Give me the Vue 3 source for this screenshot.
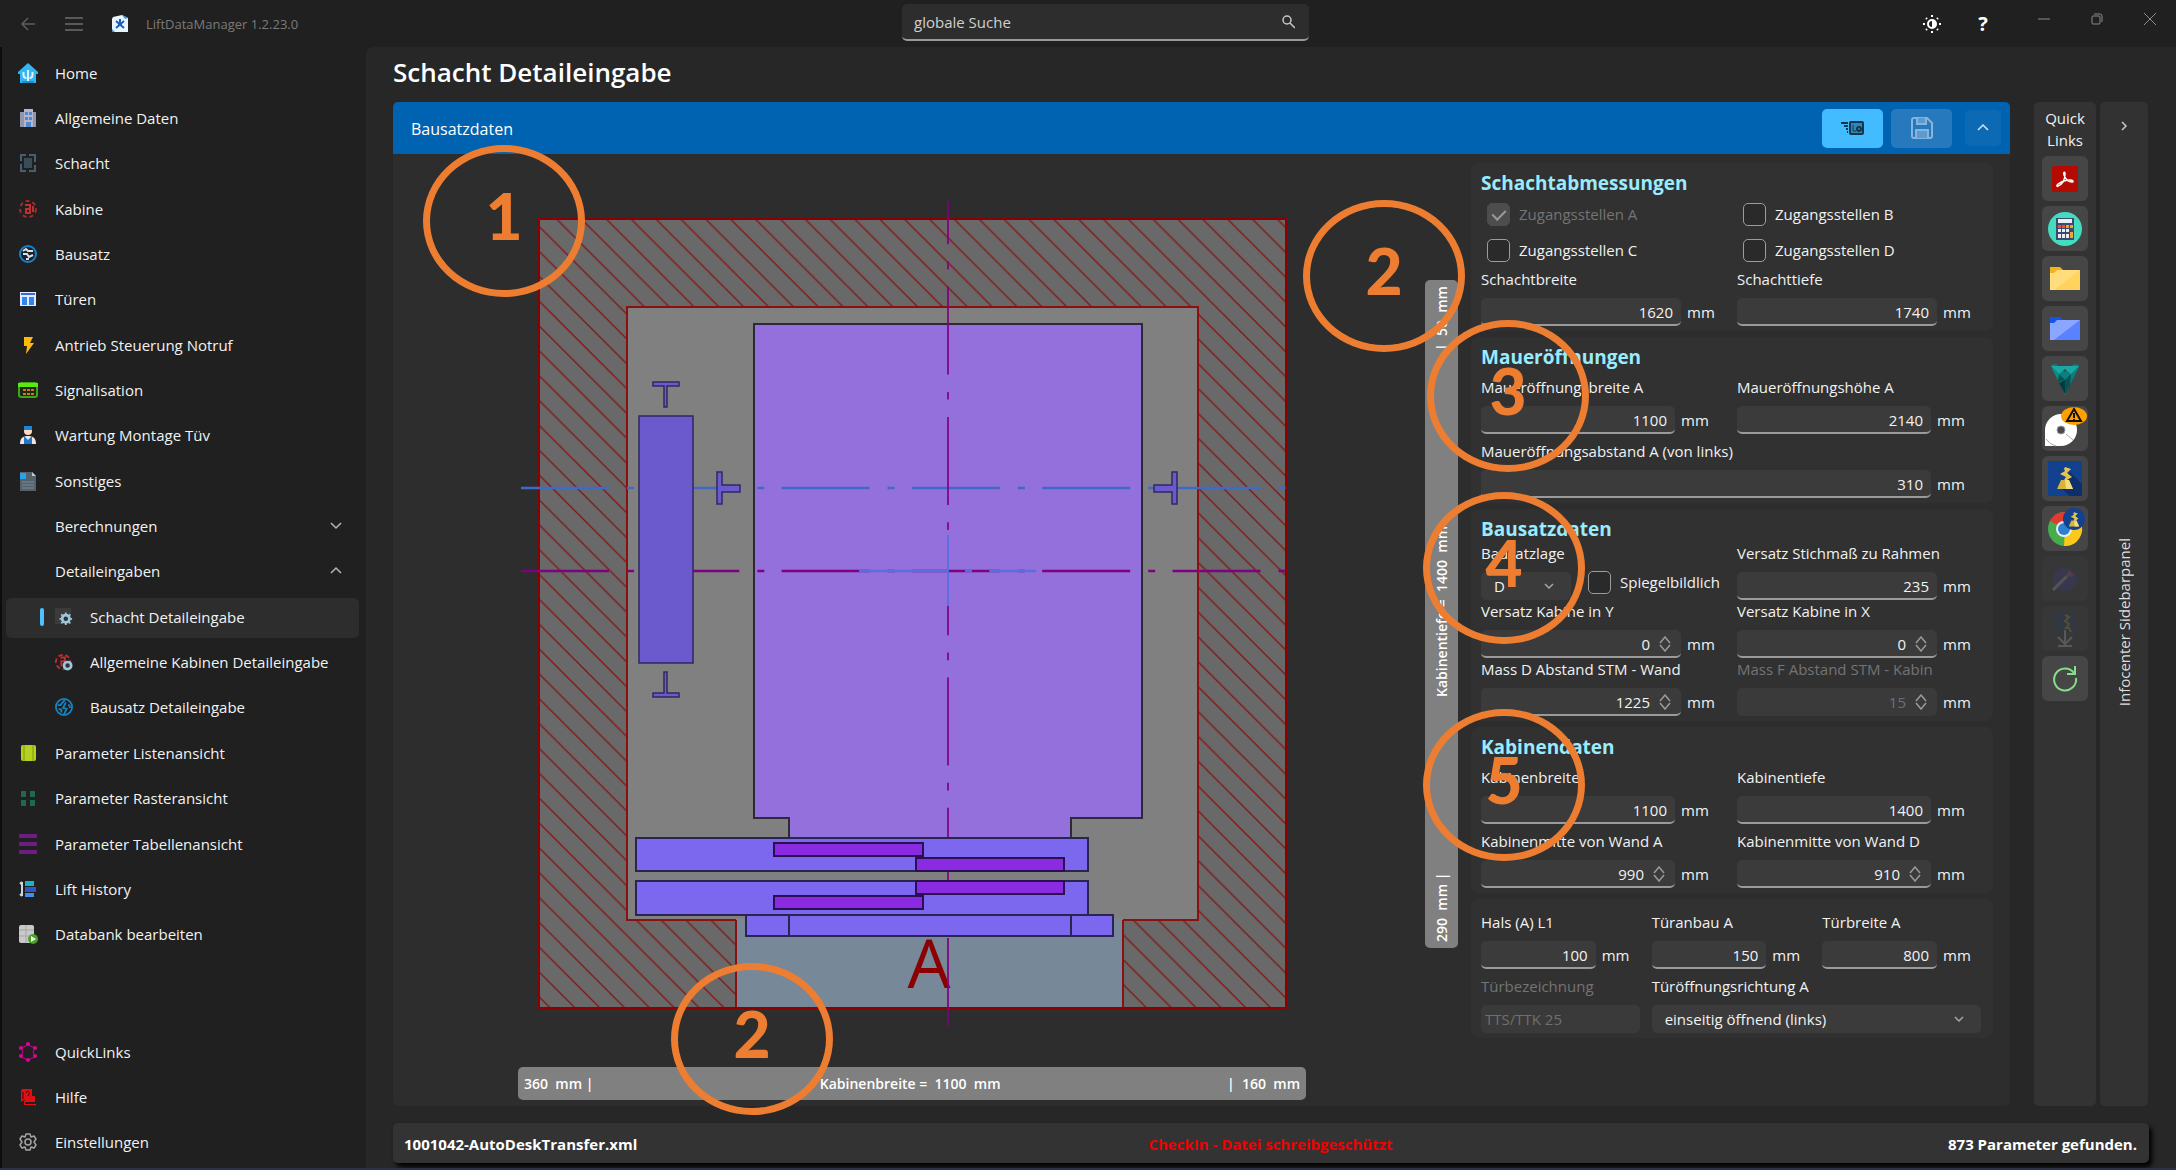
<script setup>
const icons = {
  home: '<path d="M10 0 20 9v2h-2v9H2v-9H0V9z" fill="#35b5f2"/><path d="M10 7v12M5.500 9v3a3 3 0 0 0 3 3M14.500 9v3a3 3 0 0 1-3 3" stroke="#d9f3ff" stroke-width="2" fill="none"/><path d="M4 18h12v2H4z" fill="#1d8fd0"/>',
  building: '<path d="M2 4h4V1h9v3h3v15H2z" fill="#8f97ad"/><path d="M6 1h9v18H6z" fill="#b9b4c9"/><path d="M7 4h3v3H7zm4 0h3v3h-3zM7 9h3v3H7zm4 0h3v3h-3zM8 14h5v5H8z" fill="#4a8bd4"/>',
  shaft: '<path d="M8 2H3v6M3 11v7h5M11 18h6v-6M17 9V2h-6" fill="none" stroke="#46606f" stroke-width="2"/><path d="M6 5h8v10H6z" fill="#3a4c58"/>',
  cabin: '<circle cx="10" cy="10" r="8" fill="none" stroke="#a82a2e" stroke-width="2" stroke-dasharray="4 3"/><path d="M7 6h5v4H8v4h4v-3M15 7v6" fill="none" stroke="#c22f33" stroke-width="2"/>',
  kit: '<circle cx="10" cy="10" r="8" fill="#17222b" stroke="#1683c4" stroke-width="2"/><path d="M5 7l3-2 2 2h5M5 10h4l2 3 4-2M8 15l3 0" fill="none" stroke="#d9dfe4" stroke-width="2"/>',
  door: '<path d="M2 3h16v14H2z" fill="#e4ecff"/><path d="M3 4h14v2H3z" fill="#3f66d8"/><path d="M4 8h5v8H4zm7 0h5v8h-5z" fill="#2f86ee"/>',
  bolt: '<path d="M6 2h9l-3 6h4L8 19l1-8H6z" fill="#ffb90a"/>',
  signal: '<rect x="1" y="3" width="18" height="14" rx="2" fill="#1c2a13" stroke="#3fa31c" stroke-width="2"/><path d="M0 3h20v4H0z" fill="#5be80e"/><path d="M5 9h3v2H5zm4 0h3v2H9zm4 0h3v2h-3zM5 13h3v2H5zm4 0h3v2H9zm4 0h3v2h-3z" fill="#e0701c"/>',
  worker: '<circle cx="10" cy="6" r="4" fill="#ffd9c2"/><path d="M6 1h8v4H6z" fill="#1d83d6"/><path d="M2 19c0-6 3-8 8-8s8 2 8 8z" fill="#f2e5e0"/><path d="M6 11l4 4 4-4v8H6z" fill="#1b79cf"/>',
  doc: '<path d="M2 1h12l4 4v15H2z" fill="#55626b"/><path d="M14 1l4 4h-4z" fill="#c3ccd2"/><path d="M2 2h6v6H2z" fill="#25a4ef"/><path d="M4 11h12M4 14h12M4 17h12" stroke="#7c8a94"/>',
  shaftGear: '<path d="M0 0h18v18H0z" fill="#3b3b3b"/><path d="M12 5v14M5 12h14M7 7l10 10M17 7L7 17" stroke="#9ec5d8" stroke-width="2"/><circle cx="12" cy="12" r="4" fill="#30343a" stroke="#9ec5d8" stroke-width="3"/>',
  cabinGear: '<circle cx="9" cy="10" r="8" fill="none" stroke="#c22f33" stroke-width="2" stroke-dasharray="5 3"/><path d="M6 5h5v4H7v6" fill="none" stroke="#c22f33" stroke-width="2"/><circle cx="14" cy="14" r="4" fill="#30343a" stroke="#9ec5d8" stroke-width="3"/>',
  kitRing: '<circle cx="10" cy="10" r="9" fill="none" stroke="#1683c4" stroke-width="2"/><path d="M11 2L6 8l-3 0M12 5l-3 6 4 1-3 6M15 7l2 4M4 12l3 1 0 3" fill="none" stroke="#1683c4" stroke-width="2"/>',
  list: '<rect x="3" y="2" width="15" height="16" rx="2" fill="#b4d121"/><path d="M6 2v16M15 2v16" stroke="#7e9a10"/>',
  grid: '<path d="M3 3h5v6H3zm9 0h5v6h-5zM3 12h5v6H3zm9 0h5v6h-5z" fill="#1f6a4d"/>',
  table: '<path d="M1 2h18M1 10h18M1 18h18" stroke="#6c1f80" stroke-width="4"/>',
  history: '<path d="M4 3v14M2 5l2-2M2 15l2 2" stroke="#c9d6de" stroke-width="2"/><path d="M7 2h9v5H7z" fill="#17b3c9"/><path d="M7 8h11v5H7z" fill="#3155c8"/><path d="M7 14h9v4H7z" fill="#3f8ff0"/>',
  db: '<rect x="1" y="1" width="15" height="18" rx="2" fill="#c9c9c9"/><path d="M1 6h15M1 12h15M8 1v18" stroke="#a5a5a5"/><circle cx="15" cy="15" r="5" fill="#4aa02a"/><path d="M13 12l5 3-5 3z" fill="#e9ffe0"/>',
  links: '<path d="M10 3L3 6l2 4-2 5 7 3 7-3-2-5 2-4z" fill="none" stroke="#c8008c"/><g fill="#e0009c"><circle cx="10" cy="2" r="2"/><circle cx="3" cy="6" r="2"/><circle cx="17" cy="6" r="2"/><circle cx="3" cy="14" r="2"/><circle cx="17" cy="14" r="2"/><circle cx="10" cy="18" r="2"/></g>',
  help: '<path d="M4 2h10v11H6l-3 2V4z" fill="#e00f14"/><path d="M14 9l3 0 0 6H7v2h11v2l-2-1H6v-4" fill="#e00f14"/><path d="M8 6c1-3 5-1 3 1l-1 2M5 5v7" stroke="#3a0a0a" fill="none"/>',
  gear: '<path d="M8 2h4l1 3 3-1 2 3-2 3 2 3-2 3-3-1-1 3H8l-1-3-3 1-2-3 2-3-2-3 2-3 3 1z" fill="none" stroke="#a5a5a5" stroke-width="1.500" stroke-linejoin="round"/><circle cx="10" cy="10" r="3" fill="none" stroke="#a5a5a5" stroke-width="1.500"/>',
}

const mainNav = [
  { label: 'Home', icon: 'home' },
  { label: 'Allgemeine Daten', icon: 'building' },
  { label: 'Schacht', icon: 'shaft' },
  { label: 'Kabine', icon: 'cabin' },
  { label: 'Bausatz', icon: 'kit' },
  { label: 'Türen', icon: 'door' },
  { label: 'Antrieb Steuerung Notruf', icon: 'bolt' },
  { label: 'Signalisation', icon: 'signal' },
  { label: 'Wartung Montage Tüv', icon: 'worker' },
  { label: 'Sonstiges', icon: 'doc' },
  { label: 'Berechnungen', chevron: 'M2 4l5 5 5-5' },
  { label: 'Detaileingaben', chevron: 'M2 9l5-5 5 5' },
  { label: 'Schacht Detaileingabe', icon: 'shaftGear', sub: true, active: true },
  { label: 'Allgemeine Kabinen Detaileingabe', icon: 'cabinGear', sub: true },
  { label: 'Bausatz Detaileingabe', icon: 'kitRing', sub: true },
  { label: 'Parameter Listenansicht', icon: 'list' },
  { label: 'Parameter Rasteransicht', icon: 'grid' },
  { label: 'Parameter Tabellenansicht', icon: 'table' },
  { label: 'Lift History', icon: 'history' },
  { label: 'Databank bearbeiten', icon: 'db' },
]
const footNav = [
  { label: 'QuickLinks', icon: 'links' },
  { label: 'Hilfe', icon: 'help' },
  { label: 'Einstellungen', icon: 'gear' },
]

const widthScale = ['360  mm |', 'Kabinenbreite =  1100  mm', '|  160  mm']
const depthScale = ['290  mm |', 'Kabinentiefe =  1400  mm', '|  50  mm']

const cards = [
  {
    title: 'Schachtabmessungen',
    checks: [
      { id: 'za', label: 'Zugangsstellen A', checked: true, disabled: true },
      { id: 'zb', label: 'Zugangsstellen B' },
      { id: 'zc', label: 'Zugangsstellen C' },
      { id: 'zd', label: 'Zugangsstellen D' },
    ],
    fields: [
      { id: 'sb', label: 'Schachtbreite', value: '1620' },
      { id: 'st', label: 'Schachttiefe', value: '1740' },
    ],
  },
  {
    title: 'Maueröffnungen',
    cls: 'spaced narrow',
    fields: [
      { id: 'mb', label: 'Maueröffnungsbreite A', value: '1100' },
      { id: 'mh', label: 'Maueröffnungshöhe A', value: '2140' },
      { id: 'ma', label: 'Maueröffnungsabstand A (von links)', value: '310', wide: true },
    ],
  },
  {
    title: 'Bausatzdaten',
    fields: [
      { id: 'bl', label: 'Bausatzlage', mirror: true },
      { id: 'vs', label: 'Versatz Stichmaß zu Rahmen', value: '235' },
      { id: 'vy', label: 'Versatz Kabine in Y', value: '0', step: true },
      { id: 'vx', label: 'Versatz Kabine in X', value: '0', step: true },
      { id: 'md', label: 'Mass D Abstand STM - Wand', value: '1225', step: true },
      { id: 'mf', label: 'Mass F Abstand STM - Kabin', value: '15', step: true, disabled: true },
    ],
  },
  {
    title: 'Kabinendaten',
    cls: 'spaced narrow',
    fields: [
      { id: 'kb', label: 'Kabinenbreite', value: '1100' },
      { id: 'kt', label: 'Kabinentiefe', value: '1400' },
      { id: 'ka', label: 'Kabinenmitte von Wand A', value: '990', step: true },
      { id: 'kd', label: 'Kabinenmitte von Wand D', value: '910', step: true },
    ],
  },
  {
    cls: 'spaced thirds',
    fields: [
      { id: 'ha', label: 'Hals (A) L1', value: '100' },
      { id: 'ta', label: 'Türanbau A', value: '150' },
      { id: 'tb', label: 'Türbreite A', value: '800' },
      { id: 'tz', label: 'Türbezeichnung', value: 'TTS/TTK 25', text: true, disabled: true },
      { id: 'to', label: 'Türöffnungsrichtung A', select: 'einseitig öffnend (links)', wide: true },
    ],
  },
]

const robot = '<path d="M23 11l6 2-4 4 5 4-5 3h-3l2-3-6-3 5-3-1-2z" fill="#e8c54a"/><path d="M19 24h8l4 9H15z" fill="#d9b238"/><path d="M23 24h4l4 9h-7z" fill="#f3dc7a"/>'
const quick = [
  { label: 'PDF', svg: '<rect x="10" y="10" width="26" height="26" rx="2" fill="#b30b00"/><path d="M16 30c5-2 7-7 7-12 0-3-2-2-1 1 2 5 5 7 8 7 2 0 1-2-2-2-4 0-9 2-12 4-2 2-1 3 0 2z" fill="none" stroke="#fff" stroke-width="1.500"/>' },
  { label: 'Rechner', svg: '<circle cx="23" cy="23" r="17" fill="#43dcc1"/><path d="M14 12h18v22H14z" fill="#3e4a6b"/><path d="M16 13h14v4H16z" fill="#e8eef5"/><path d="M16 19h3v3h-3zm4 0h3v3h-3z" fill="#e5533f"/><path d="M24 19h3v3h-3zm4 0h3v3h-3z" fill="#f0a23a"/><path d="M16 23h3v3h-3zm4 0h3v3h-3zm4 0h3v3h-3zM16 28h3v4h-3zm4 0h3v4h-3zm4 0h3v4h-3z" fill="#e8eef5"/><path d="M28 26h3v6h-3z" fill="#f0a23a"/>' },
  { label: 'Ordner', svg: '<path d="M8 11h10l3 3v4H8z" fill="#f5b01e"/><path d="M8 17l4 0 3-3h23v20H8z" fill="#ffdd7d"/><path d="M38 14v20H12z" fill="#ffcf4f" opacity=".7"/>' },
  { label: 'Projektordner', svg: '<path d="M8 11h10l3 3v4H8z" fill="#1652f0"/><path d="M8 17l4 0 3-3h23v20H8z" fill="#8aa6ff"/><path d="M38 14v20H12z" fill="#4d78ff" opacity=".8"/>' },
  { label: 'Vault', svg: '<path d="M9 9l5-1 9 8 9-8 5 1-1 4-13 26z" fill="#0a7f7f"/><path d="M9 10h28l-8 8-6-5-6 5z" fill="#19a8a3"/><path d="M9 11l8 7-1 6z" fill="#0d8c8a"/><path d="M17 18l6 6-7 2zM23 24l6-6-1 12-5 8z" fill="#075252"/><path d="M17 27l6-3 0 14z" fill="#033a3b"/>' },
  { label: 'CAD', svg: '<circle cx="19" cy="24" r="16" fill="#fff"/><path d="M3 24v16h16z" fill="#fff"/><circle cx="19" cy="24" r="4" fill="#4a4a4a" stroke="#999"/><path d="M24 28l7 6M4 33a17 17 0 0 0 10 7" stroke="#aaa" fill="none"/><ellipse cx="32" cy="10" rx="13" ry="9" fill="#ffa000"/><path d="M32 3l7 12H25z" fill="none" stroke="#111" stroke-width="2"/><path d="M32 7v5M32 13v1" stroke="#111" stroke-width="2"/>' },
  { label: 'Auslegung', svg: '<path d="M6 5h34v35H6z" fill="#12418f"/><path d="M28 16l12 12v12H28l-8-7z" fill="#0d2f6b"/>' + robot },
  { label: 'Auslegung Web', svg: '<circle cx="23" cy="23" r="17" fill="#46ad4c"/><path d="M23 23L8 15a17 17 0 0 1 30 0z" fill="#df3b30"/><path d="M23 23l15-8a17 17 0 0 1-16 25z" fill="#fbc91c"/><circle cx="22" cy="23" r="8" fill="#e8f0f7"/><circle cx="22" cy="23" r="6" fill="#2f7fd0"/><circle cx="32" cy="13" r="11" fill="#12418f"/><g transform="translate(17 -1) scale(.65)">' + robot + '</g>' },
  { label: 'Werkzeug', off: true, svg: '<circle cx="23" cy="23" r="12" fill="#3a3aa8"/><path d="M11 34l14-14" stroke="#c8c8d8" stroke-width="3"/><path d="M24 21l3-7 5 6z" fill="#c96a5a"/>' },
  { label: 'Import', off: true, svg: '<path d="M12 6h22v22H12z" fill="#23406e"/><path d="M23 9l4 2-4 4 4 3-3 4h3l2 4" stroke="#c9a63a" stroke-width="2" fill="none"/><path d="M23 24v13M16 31l7 7 7-7M16 40h14" stroke="#ddd" stroke-width="2" fill="none"/>' },
  { label: 'Aktualisieren', svg: '<path d="M32 17a11 11 0 1 0 2 5M33 10v8h-8" fill="none" stroke="#83df8a" stroke-width="2"/>' },
]

const marks = [
  { n: 1, x: 504, y: 221 },
  { n: 2, x: 1384, y: 276 },
  { n: 3, x: 1508, y: 396 },
  { n: 4, x: 1504, y: 568 },
  { n: 5, x: 1504, y: 785 },
  { n: 2, x: 752, y: 1039 },
]
</script>

<template>
  <div class="page">
    <header class="titlebar">
      <button class="ghost back" aria-label="Zurück"><svg width="16" height="16" viewBox="0 0 16 16"><path d="M15 8H2M8 2L2 8l6 6" fill="none" stroke="#5c5c5c" stroke-width="1.500" /></svg></button>
      <button class="ghost burger" aria-label="Menü"><svg width="18" height="16" viewBox="0 0 18 16"><path d="M0 2h18M0 8h18M0 14h18" stroke="#6c6c6c" stroke-width="1.500" /></svg></button>
      <svg class="logo" width="18" height="18" viewBox="0 0 18 18"><path d="M2 2l9-2 6 3v14H1V4z" fill="#eaf6ff" /><path d="M11 0l6 3-3 1zM1 14l3 3H1z" fill="#2f9be8" /><path d="M5 6l8 7M13 6l-8 7M9 4v4" stroke="#1c62b8" stroke-width="2" /><circle cx="9" cy="9" r="2" fill="#1c62b8" /></svg>
      <span class="app-name">LiftDataManager 1.2.23.0</span>
      <div class="search">
        <input type="text" value="globale Suche" aria-label="globale Suche" />
        <svg width="14" height="14" viewBox="0 0 14 14"><circle cx="6" cy="5" r="4" fill="none" stroke="#c8c8c8" stroke-width="1.500" /><path d="M9 8l5 5" stroke="#c8c8c8" stroke-width="1.500" /></svg>
      </div>
      <div class="window-tools">
        <button class="ghost" aria-label="Design"><svg width="20" height="20" viewBox="0 0 20 20"><circle cx="10" cy="10" r="4" fill="none" stroke="#fff" stroke-width="2" /><path d="M10 6a4 4 0 0 1 0 8z" fill="#fff" /><path d="M10 1v2M10 17v2M1 10h2M17 10h2M4 4l1 1M15 15l1 1M16 4l-1 1M5 15l-1 1" stroke="#fff" stroke-width="2" /></svg></button>
        <button class="ghost help" aria-label="Hilfe">?</button>
        <button class="ghost sys" aria-label="Minimieren"><svg width="12" height="12" viewBox="0 0 12 12"><path d="M0 6h12" stroke="#8b8b8b" /></svg></button>
        <button class="ghost sys" aria-label="Wiederherstellen"><svg width="12" height="12" viewBox="0 0 12 12"><rect x="1" y="3" width="8" height="8" rx="1" fill="none" stroke="#8b8b8b" /><path d="M3 1h6a2 2 0 0 1 2 2v6" fill="none" stroke="#8b8b8b" /></svg></button>
        <button class="ghost sys" aria-label="Schließen"><svg width="12" height="12" viewBox="0 0 12 12"><path d="M0 0l12 12M12 0L0 12" stroke="#8b8b8b" /></svg></button>
      </div>
    </header>

    <div class="shell">
      <nav class="sidebar">
        <ul class="nav-main">
          <li v-for="item in mainNav" :key="item.label">
            <a href="#" :class="{ sub: item.sub, active: item.active }">
              <svg v-if="item.icon" class="nav-icon" viewBox="0 0 20 20" v-html="icons[item.icon]"></svg>
              <span v-else class="nav-icon"></span>
              <span class="nav-label">{{ item.label }}</span>
              <svg v-if="item.chevron" width="14" height="14" viewBox="0 0 14 14"><path :d="item.chevron" fill="none" stroke="#b5b5b5" stroke-width="1.500" /></svg>
            </a>
          </li>
        </ul>
        <ul class="nav-foot">
          <li v-for="item in footNav" :key="item.label">
            <a href="#">
              <svg class="nav-icon" viewBox="0 0 20 20" v-html="icons[item.icon]"></svg>
              <span class="nav-label">{{ item.label }}</span>
            </a>
          </li>
        </ul>
      </nav>

      <main class="main">
        <h1>Schacht Detaileingabe</h1>
        <div class="work">
          <section class="panel">
            <header class="panel-head">
              <h2>Bausatzdaten</h2>
              <button class="act primary" aria-label="CAD Ansicht"><svg width="24" height="16" viewBox="0 0 24 16"><path d="M0 3h7M3 6h4M5 9h2M6 12h1" stroke="#12364c" stroke-width="2" /><rect x="9" y="2" width="13" height="12" rx="1" fill="#2f86b8" stroke="#12364c" stroke-width="2" /><path d="M12 5v6h3" stroke="#12364c" fill="none" /><circle cx="18" cy="9" r="2" stroke="#12364c" stroke-width="2" fill="none" /></svg></button>
              <button class="act" aria-label="Speichern" disabled><svg width="22" height="22" viewBox="0 0 22 22"><path d="M3 1h13l5 5v13a2 2 0 0 1-2 2H3a2 2 0 0 1-2-2V3a2 2 0 0 1 2-2z" fill="none" stroke="#86b4dc" stroke-width="2" /><path d="M6 1v6h9V1M5 21v-8h12v8" fill="#5c9bcf" stroke="#86b4dc" stroke-width="2" /></svg></button>
              <button class="act fold" aria-label="Einklappen"><svg width="12" height="12" viewBox="0 0 12 12"><path d="M1 8l5-5 5 5" fill="none" stroke="#d3e4f3" stroke-width="1.500" /></svg></button>
            </header>

            <div class="panel-body">
              <div class="stage">
                <svg class="plan" viewBox="518 196 788 832" role="img" aria-label="Schachtgrundriss">
                  <defs>
                    <pattern id="hatch" patternUnits="userSpaceOnUse" x="337.500" y="0" width="24.850" height="24.850">
                      <path d="M0 0L24.850 24.850M-2 22.850l4 4M22.850 -2l4 4" stroke="#8b0000" stroke-width="1.300" opacity=".8" />
                    </pattern>
                  </defs>
                  <rect x="539" y="219" width="747" height="789" fill="#696969" />
                  <rect x="539" y="219" width="747" height="789" fill="url(#hatch)" stroke="#8b0000" stroke-width="2" />
                  <rect x="627" y="307" width="571" height="613" fill="#808080" stroke="#8b1010" stroke-width="2" />
                  <rect x="736" y="919" width="387" height="88" fill="#778899" />
                  <path d="M736 920v88M1123 920v88" stroke="#8b1010" stroke-width="2" />
                  <path d="M539 1008h747" stroke="#8b0000" stroke-width="2" />
                  <path d="M754 324h388v494h-71v53H789v-53h-35z" fill="#9370db" stroke="#2c2a36" stroke-width="2" />
                  <text x="929" y="988" text-anchor="middle">A</text>
                  <g fill="none">
                    <path d="M521 488h782" stroke="#4169c8" stroke-width="2.500" stroke-dasharray="88 18 7 17.300" />
                    <path d="M521 571h782" stroke="#800080" stroke-width="2.500" stroke-dasharray="88 18 7 17.300" />
                    <path d="M948 201v825" stroke="#800080" stroke-width="2" stroke-dasharray="88 17.300 7.700 17.300" stroke-dashoffset="44.700" opacity=".85" />
                    <path d="M859 571h177" stroke="#5a6ee0" stroke-width="2.500" stroke-dasharray="88 18 7 17.300" />
                    <path d="M948 535v71" stroke="#5a6ee0" stroke-width="2" />
                  </g>
                  <g fill="#6a5acd" stroke="#2f2860" stroke-width="1.500">
                    <rect x="639" y="416" width="54" height="247" />
                    <path d="M653 382h26v4h-12v21h-3v-21h-11zM664 672h3v21h12v4h-26v-4h11z" />
                    <path d="M717 472h5v13h18v7h-18v12h-5zM1177 472h-5v13h-18v7h18v12h5z" />
                  </g>
                  <g fill="#7b68ee" stroke="#2a2450" stroke-width="2">
                    <rect x="636" y="838" width="452" height="33" />
                    <rect x="636" y="881" width="452" height="34" />
                    <rect x="746" y="915" width="367" height="21" />
                    <path d="M789 915v21M1071 915v21" />
                  </g>
                  <g fill="#8a2be2" stroke="#2a1050" stroke-width="2">
                    <rect x="774" y="843" width="149" height="13" />
                    <rect x="916" y="858" width="148" height="13" />
                    <rect x="916" y="881" width="148" height="13" />
                    <rect x="774" y="896" width="149" height="13" />
                  </g>
                </svg>
                <div class="scale">
                  <span v-for="t in widthScale" :key="t">{{ t }}</span>
                </div>
              </div>

              <div class="scale upright">
                <span v-for="t in depthScale" :key="t">{{ t }}</span>
              </div>

              <form class="cards" @submit.prevent>
                <fieldset v-for="(card, i) in cards" :key="i" class="card" :class="card.cls">
                  <h3 v-if="card.title">{{ card.title }}</h3>
                  <div v-if="card.checks" class="fields">
                    <label v-for="c in card.checks" :key="c.id" class="check" :class="{ off: c.disabled }">
                      <input type="checkbox" :checked="c.checked" :disabled="c.disabled" />
                      <span>{{ c.label }}</span>
                    </label>
                  </div>
                  <div class="fields">
                    <template v-for="f in card.fields" :key="f.id">
                      <div v-if="f.mirror" class="mirror">
                        <div class="lage">
                          <label :for="f.id">{{ f.label }}</label>
                          <div class="box">
                            <select :id="f.id"><option>D</option></select>
                            <svg class="drop" width="12" height="12" viewBox="0 0 12 12"><path d="M2 4l4 4 4-4" fill="none" stroke="#a8a8a8" stroke-width="1.500" /></svg>
                          </div>
                        </div>
                        <label class="check"><input type="checkbox" /><span>Spiegelbildlich</span></label>
                      </div>
                      <div v-else class="field" :class="{ wide: f.wide, off: f.disabled, plain: f.text || f.select }">
                        <label :for="f.id">{{ f.label }}</label>
                        <div class="row">
                          <div class="box">
                            <template v-if="f.select">
                              <select :id="f.id"><option>{{ f.select }}</option></select>
                              <svg class="drop" width="12" height="12" viewBox="0 0 12 12"><path d="M2 4l4 4 4-4" fill="none" stroke="#a8a8a8" stroke-width="1.500" /></svg>
                            </template>
                            <input v-else :id="f.id" type="text" :value="f.value" :disabled="f.disabled" :class="{ stepped: f.step, textual: f.text }" />
                            <button v-if="f.step" type="button" class="stepper" aria-label="Wert ändern"><svg width="12" height="16" viewBox="0 0 12 16"><path d="M1 7l5-6 5 6M1 9l5 6 5-6" fill="none" stroke="#9b9b9b" stroke-width="1.500" /></svg></button>
                          </div>
                          <span v-if="!f.text && !f.select" class="unit">mm</span>
                        </div>
                      </div>
                    </template>
                  </div>
                </fieldset>
              </form>
            </div>
          </section>

          <aside class="quick">
            <h2>Quick Links</h2>
            <button v-for="q in quick" :key="q.label" :aria-label="q.label" :class="{ off: q.off }" :disabled="q.off">
              <svg width="46" height="45" viewBox="0 0 46 45" v-html="q.svg"></svg>
            </button>
          </aside>
          <aside class="info">
            <button class="ghost" aria-label="Aufklappen"><svg width="12" height="12" viewBox="0 0 12 12"><path d="M4 2l4 4-4 4" fill="none" stroke="#c8c8c8" stroke-width="1.500" /></svg></button>
            <span>Infocenter Sidebarpanel</span>
          </aside>
        </div>
        <footer class="status">
          <span>1001042-AutoDeskTransfer.xml</span>
          <span class="locked">CheckIn - Datei schreibgeschützt</span>
          <span class="count">873 Parameter gefunden.</span>
        </footer>
      </main>
    </div>

    <div v-for="(m, i) in marks" :key="i" class="mark" :style="{ left: m.x + 'px', top: m.y + 'px' }">{{ m.n }}</div>
  </div>
</template>

<style>
body { background: #202020; }
</style>

<style scoped>
* { box-sizing: border-box; margin: 0; padding: 0; }
.page {
  position: relative;
  display: flex;
  flex-direction: column;
  min-height: 100vh;
  overflow: hidden;
  background: #202020;
  border-bottom: 2px solid #2c3049;
  color: #f2f2f2;
  font: 15px/20px "Open Sans", "Noto Sans", sans-serif;
}
button, input, select { font: inherit; color: inherit; border: 0; background: none; }
svg { display: block; flex: none; }
a { color: inherit; text-decoration: none; }
ul { list-style: none; }
.ghost { display: grid; place-items: center; }

.titlebar { position: relative; display: flex; align-items: center; height: 47px; padding-left: 20px; }
.burger { margin-left: 29px; }
.logo { margin-left: 28px; }
.app-name { margin-left: 17px; font-size: 13px; color: #7a7a7a; }
.search {
  position: absolute;
  left: calc(50% - 186px);
  top: 4px;
  display: flex;
  align-items: center;
  width: 407px;
  height: 37px;
  padding: 0 14px 0 12px;
  background: #2d2d2d;
  border-bottom: 2px solid #9a9a9a;
  border-radius: 5px;
}
.search input { flex: 1; min-width: 0; color: #d0d0d0; }
.window-tools { display: flex; align-items: center; margin-left: auto; padding-right: 16px; }
.window-tools .ghost { width: 20px; height: 20px; }
.window-tools .help { margin: 0 40px 0 31px; font-size: 20px; font-weight: 700; color: #fff; }
.window-tools .sys { margin: -10px 0 0 32px; width: 21px; }
.window-tools .help + .sys { margin-left: 0; }

.shell { display: flex; flex: 1; }
.sidebar { display: grid; grid-template-rows: 200fr 30fr; gap: 72px; width: 366px; flex: none; padding: 4px 0 2px; border-left: 2px solid #0c0c0c; }
.sidebar ul { display: flex; flex-direction: column; }
.sidebar li { flex: 1; display: flex; align-items: center; }
.sidebar a { display: flex; align-items: center; width: 353px; height: 40px; margin-left: 4px; padding: 0 16px 2px 12px; border-radius: 5px; }
.nav-icon { width: 20px; height: 20px; margin-right: 17px; }
.nav-label { flex: 1; white-space: nowrap; }
.sidebar a.sub { position: relative; padding-left: 49px; }
.sub .nav-icon { width: 18px; height: 18px; }
.sidebar a.active { background: #2d2d2d; }
.sidebar a.active::before { content: ""; position: absolute; left: 34px; top: 10px; width: 4px; height: 18px; border-radius: 2px; background: #4cc2ff; }

.main { flex: 1; min-width: 0; display: flex; flex-direction: column; padding: 0 27px 5px; background: #272727; border-radius: 8px 0 0 0; }
h1 { height: 55px; font-size: 26px; font-weight: 600; line-height: 51px; color: #fff; }
.work { display: flex; flex: 1; padding-right: 1px; }
.panel { flex: 1; min-width: 0; display: flex; flex-direction: column; background: #2d2d2d; border-radius: 5px; }
.panel-head { display: flex; align-items: center; height: 52px; padding: 0 9px 0 18px; background: #0063b1; border-radius: 5px 5px 0 0; }
.panel-head h2 { flex: 1; padding-top: 2px; font-size: 16px; font-weight: 400; color: #fff; }
.act { display: grid; place-items: center; width: 61px; height: 39px; margin-left: 8px; border-radius: 5px; background: #2779bd; }
.act.primary { background: #42bcff; }
.act.fold { width: 36px; height: 36px; margin-left: 13px; background: #0c6ab5; }
.panel-body { flex: 1; display: grid; grid-template-columns: minmax(0, 1fr) 33px 535px; padding-right: 17px; }
.stage { display: flex; flex-direction: column; align-items: center; padding: 42px 0 6px 6px; }
.plan { width: 788px; max-width: 100%; }
.plan text { font-size: 68px; fill: #8b0000; }
.scale { display: flex; align-items: center; justify-content: space-between; width: 788px; max-width: 100%; height: 33px; margin-top: 39px; padding: 0 6px; border-radius: 5px; background: #808080; color: #fff; font-size: 14px; font-weight: 600; white-space: pre; }
.scale.upright { width: 33px; height: 668px; margin-top: 126px; padding: 6px 0; writing-mode: vertical-rl; transform: rotate(180deg); }

.cards { display: flex; flex-direction: column; gap: 6px; margin: 9px 0 0 13px; }
.card { min-width: 0; padding: 7px 0 5px 10px; border: 0; border-radius: 8px; background: #313131; }
h3 { font-size: 19px; font-weight: 700; line-height: 26px; color: #99ebff; }
.fields { display: grid; grid-template-columns: 1fr 1fr; }
.check { display: flex; align-items: center; height: 36px; padding-left: 6px; white-space: nowrap; }
.check input { position: relative; appearance: none; width: 23px; height: 23px; margin-right: 9px; border: 1px solid #9c9c9c; border-radius: 5px; background: #2a2a2a; }
.check input:disabled { background: #4d4d4d; border-color: #4d4d4d; }
.check input:checked::after { content: ""; position: absolute; left: 7px; top: 3px; width: 6px; height: 11px; border: solid #9a9a9a; border-width: 0 2px 2px 0; transform: rotate(45deg); }
.check.off, .off label { color: #747474; }
.field { min-width: 0; padding-right: 24px; }
.field label, .lage label { display: block; height: 24px; line-height: 22px; margin-bottom: 6px; white-space: nowrap; }
.narrow .field { padding-right: 30px; }
.spaced .fields { padding-top: 6px; row-gap: 6px; }
.thirds .fields { grid-template-columns: 1fr 1fr 1fr; padding-top: 5px; }
.field.wide { grid-column: span 2; }
.thirds .field.plain { padding-right: 12px; }
.row { display: flex; align-items: center; gap: 6px; }
.box { position: relative; flex: 1; min-width: 0; }
.box input, .box select { display: block; width: 100%; height: 28px; border-radius: 5px; background: #3b3b3b; }
.box input { padding: 2px 8px 0; border-bottom: 2px solid #9a9a9a; text-align: right; }
.box input.stepped { padding-right: 31px; }
.box input.textual { padding-left: 4px; text-align: left; }
.box input:disabled { border-color: #3a3a3a; background: #3a3a3a; color: #6f6f6f; }
.box select { appearance: none; padding-left: 13px; }
.drop { position: absolute; right: 16px; top: 8px; pointer-events: none; }
.stepper { position: absolute; right: 10px; top: 6px; }
.unit { width: 26px; }
.mirror { display: flex; }
.lage { width: 90px; }
.mirror .check { height: 24px; margin: 28px 0 0 11px; }

.quick { display: flex; flex-direction: column; align-items: center; gap: 5px; width: 62px; margin-left: 24px; padding-top: 5px; background: #333; border-radius: 5px; }
.quick h2 { width: 50px; font-size: 15px; font-weight: 400; line-height: 22px; text-align: center; }
.quick button { width: 46px; height: 45px; border-radius: 6px; background: #464646; }
.quick button.off { background: #373737; }
.quick .off svg { opacity: .2; }
.info { display: flex; flex-direction: column; align-items: center; width: 48px; margin-left: 4px; padding-top: 18px; background: #323232; border-radius: 5px; }
.info span { margin-top: 406px; writing-mode: vertical-rl; transform: rotate(180deg); font-size: 15px; color: #dedede; white-space: nowrap; }

.status { display: grid; grid-template-columns: 1fr auto 1fr; align-items: center; height: 40px; margin-top: 17px; padding: 2px 12px 0 11px; background: #333; border-radius: 5px; box-shadow: 3px 4px 5px #000; font-size: 15px; font-weight: 700; color: #fff; }
.locked { color: #f00000; }
.count { text-align: right; }

.mark { position: absolute; display: grid; place-items: center; width: 162px; height: 152px; margin: -76px 0 0 -81px; padding-bottom: 10px; border: 7px solid #ed7d31; border-radius: 50%; color: #ed7d31; font: 900 64px/64px Lato, sans-serif; pointer-events: none; }
</style>
